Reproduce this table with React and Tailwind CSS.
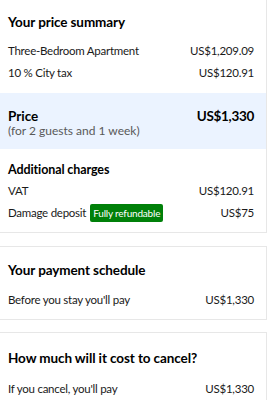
export default function App() {
  const row = 'flex items-center justify-between text-[11.5px] tracking-[-0.25px] leading-[18px] text-[#1a1a1a]'
  const title = 'text-[13.5px] font-bold leading-[20px] tracking-[-0.1px] text-black'

  return (
    <div className="w-[267px] h-[400px] overflow-hidden bg-white font-['Lato',sans-serif] text-[#1a1a1a]">
      {/* price summary */}
      <div className="border border-l-0 border-t-0 border-[#e7e7e7]">
        <div className="pl-2 pr-3 pt-[12px]">
          <h2 className={title}>Your price summary</h2>
          <div className={row + ' mt-[10px]'}>
            <span>Three-Bedroom Apartment</span>
            <span>US$1,209.09</span>
          </div>
          <div className={row + ' mt-[4px]'}>
            <span>10 % City tax</span>
            <span>US$120.91</span>
          </div>
        </div>

        <div className="mt-[11px] bg-[#ebf3ff] pl-2 pr-3 pt-[14px] pb-[12px]">
          <div className="flex items-start justify-between">
            <div>
              <div className="text-[13.5px] font-bold leading-[18px] text-black">Price</div>
              <div className="text-[12px] leading-[12px] text-[#595959]">(for 2 guests and 1 week)</div>
            </div>
            <div className="text-[13.5px] font-bold leading-[18px] tracking-[-0.3px] text-black">US$1,330</div>
          </div>
        </div>

        <div className="pl-2 pr-3 pt-[12px] pb-[10px]">
          <h3 className="text-[12.5px] font-bold leading-[18px] tracking-[-0.1px] text-black">Additional charges</h3>
          <div className={row + ' mt-[3px]'}>
            <span>VAT</span>
            <span>US$120.91</span>
          </div>
          <div className={row + ' mt-[4px]'}>
            <span className="flex items-center gap-[4px]">
              Damage deposit
              <span className="rounded-[2px] bg-[#008009] px-[3px] text-[10px] tracking-[-0.2px] leading-[18px] text-white">
                Fully refundable
              </span>
            </span>
            <span>US$75</span>
          </div>
        </div>
      </div>

      {/* payment schedule */}
      <div className="mt-[13px] border border-l-0 border-[#e7e7e7] pl-2 pr-3 pt-[13px] pb-[10px]">
        <h2 className={title}>Your payment schedule</h2>
        <div className={row + ' mt-[11px]'}>
          <span>Before you stay you'll pay</span>
          <span>US$1,330</span>
        </div>
      </div>

      {/* cancellation */}
      <div className="mt-[12px] border border-l-0 border-[#e7e7e7] pl-2 pr-3 pt-[15px] pb-[12px]">
        <h2 className={title}>How much will it cost to cancel?</h2>
        <div className={row + ' mt-[12px]'}>
          <span>If you cancel, you'll pay</span>
          <span>US$1,330</span>
        </div>
      </div>
    </div>
  )
}
